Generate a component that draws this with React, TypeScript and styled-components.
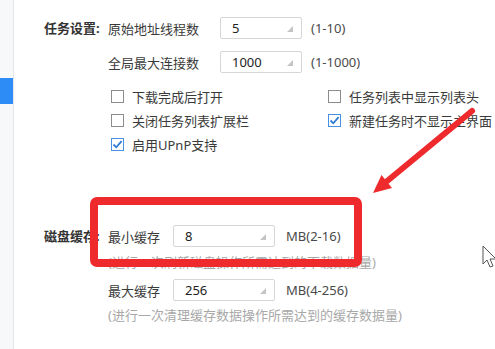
import React from 'react';
import styled, { createGlobalStyle } from 'styled-components';

const GlobalStyle = createGlobalStyle`
  html, body {
    margin: 0;
    padding: 0;
    background: #ffffff;
  }
  body {
    font-family: 'Noto Sans', 'Noto Sans CJK SC', sans-serif;
    color: #333333;
  }
`;

const Page = styled.div`
  position: relative;
  display: flex;
  width: 495px;
  height: 349px;
  overflow: hidden;
  background: #ffffff;
`;

const Sidebar = styled.div`
  flex: 0 0 14px;
  padding-top: 78px;
  background: #f7f8fa;
  border-right: 1px solid #e4e6ea;
  box-sizing: border-box;
`;

const ActiveTab = styled.div`
  width: 13px;
  height: 26px;
  background: #2e8cf6;
`;

const Main = styled.div`
  flex: 1;
  padding: 17px 0 0 30px;
  display: flex;
  flex-direction: column;
`;

const Section = styled.div<{ $gap?: number }>`
  display: flex;
  margin-top: ${(p) => p.$gap ?? 0}px;
`;

const SectionLabel = styled.div`
  flex: 0 0 64px;
  height: 22px;
  line-height: 22px;
  font-size: 13px;
  font-weight: 700;
  color: #333333;
  white-space: nowrap;
`;

const SectionBody = styled.div`
  display: flex;
  flex-direction: column;
`;

const FieldRow = styled.div<{ $mt?: number }>`
  display: flex;
  align-items: center;
  height: 22px;
  margin-top: ${(p) => p.$mt ?? 0}px;
`;

const FieldLabel = styled.span<{ $w: number }>`
  width: ${(p) => p.$w}px;
  font-size: 13px;
  color: #3a3a3a;
  white-space: nowrap;
`;

const Spin = styled.div<{ $w: number }>`
  position: relative;
  width: ${(p) => p.$w}px;
  height: 22px;
  box-sizing: border-box;
  border: 1px solid #d6d6d6;
  border-radius: 2px;
  padding-left: 11px;
  font-size: 13px;
  line-height: 20px;
  color: #222222;
  background: #ffffff;

  &::after {
    content: '';
    position: absolute;
    right: 8px;
    bottom: 6px;
    border-style: solid;
    border-width: 0 0 6px 6px;
    border-color: transparent transparent #c4c4c4 transparent;
  }
`;

const Range = styled.span<{ $ml: number }>`
  margin-left: ${(p) => p.$ml}px;
  font-size: 13px;
  color: #4a4a4a;
  white-space: nowrap;
`;

const CheckGrid = styled.div`
  display: grid;
  grid-template-columns: 217px auto;
  grid-auto-rows: 24px;
  margin-top: 11px;
  margin-left: 3px;
`;

const CheckItem = styled.label<{ $col?: number }>`
  display: flex;
  align-items: center;
  gap: 8px;
  font-size: 13px;
  color: #3a3a3a;
  white-space: nowrap;
  grid-column: ${(p) => p.$col ?? 'auto'};
`;

const Box = styled.span<{ $on?: boolean }>`
  display: inline-flex;
  align-items: center;
  justify-content: center;
  width: 13px;
  height: 13px;
  box-sizing: border-box;
  border: 1px solid ${(p) => (p.$on ? '#4a90e2' : '#8c8c8c')};
  background: #ffffff;
`;

const Hint = styled.div<{ $mt: number }>`
  margin-top: ${(p) => p.$mt}px;
  font-size: 13px;
  line-height: 16px;
  color: #a8a8a8;
  white-space: nowrap;
`;

const Highlight = styled.div`
  position: absolute;
  left: 90px;
  top: 197px;
  width: 272px;
  height: 70px;
  box-sizing: border-box;
  border: 8px solid #ee2a2d;
  border-radius: 7px;
  pointer-events: none;
`;

const Overlay = styled.svg`
  position: absolute;
  left: 0;
  top: 0;
  pointer-events: none;
`;

const Check = ({ on, children, col }: { on?: boolean; children: React.ReactNode; col?: number }) => (
  <CheckItem $col={col}>
    <Box $on={on}>
      {on && (
        <svg width="11" height="11" viewBox="0 0 11 11">
          <path d="M1.5 5.5 L4.3 8.3 L9.6 2.2" fill="none" stroke="#2f7ad6" strokeWidth="1.8" />
        </svg>
      )}
    </Box>
    {children}
  </CheckItem>
);

const App = () => {
  return (
    <Page>
      <GlobalStyle />
      <Sidebar>
        <ActiveTab />
      </Sidebar>
      <Main>
        <Section>
          <SectionLabel>任务设置:</SectionLabel>
          <SectionBody>
            <FieldRow>
              <FieldLabel $w={112}>原始地址线程数</FieldLabel>
              <Spin $w={82}>5</Spin>
              <Range $ml={9}>(1-10)</Range>
            </FieldRow>
            <FieldRow $mt={12}>
              <FieldLabel $w={112}>全局最大连接数</FieldLabel>
              <Spin $w={82}>1000</Spin>
              <Range $ml={9}>(1-1000)</Range>
            </FieldRow>
            <CheckGrid>
              <Check>下载完成后打开</Check>
              <Check>任务列表中显示列表头</Check>
              <Check>关闭任务列表扩展栏</Check>
              <Check on>新建任务时不显示主界面</Check>
              <Check on col={1}>启用UPnP支持</Check>
            </CheckGrid>
          </SectionBody>
        </Section>

        <Section $gap={69}>
          <SectionLabel>磁盘缓存:</SectionLabel>
          <SectionBody>
            <FieldRow>
              <FieldLabel $w={65}>最小缓存</FieldLabel>
              <Spin $w={102}>8</Spin>
              <Range $ml={11}>MB(2-16)</Range>
            </FieldRow>
            <Hint $mt={7}>(进行一次刷新磁盘操作所需达到的下载数据量)</Hint>
            <FieldRow $mt={9}>
              <FieldLabel $w={65}>最大缓存</FieldLabel>
              <Spin $w={102}>256</Spin>
              <Range $ml={11}>MB(4-256)</Range>
            </FieldRow>
            <Hint $mt={6}>(进行一次清理缓存数据操作所需达到的缓存数据量)</Hint>
          </SectionBody>
        </Section>
      </Main>

      <Highlight />
      <Overlay width="495" height="349" viewBox="0 0 495 349">
        <line x1="472" y1="111" x2="386" y2="182" stroke="#ee2a2d" strokeWidth="6" strokeLinecap="round" />
        <polygon points="373,193 381.5,175 392,188" fill="#ee2a2d" />
        <path
          d="M483 246 L483 264 L487 260 L490 267 L493 266 L490 259 L496 259 Z"
          fill="#ffffff"
          stroke="#555555"
          strokeWidth="1"
          strokeLinejoin="round"
        />
      </Overlay>
    </Page>
  );
};

export default App;
